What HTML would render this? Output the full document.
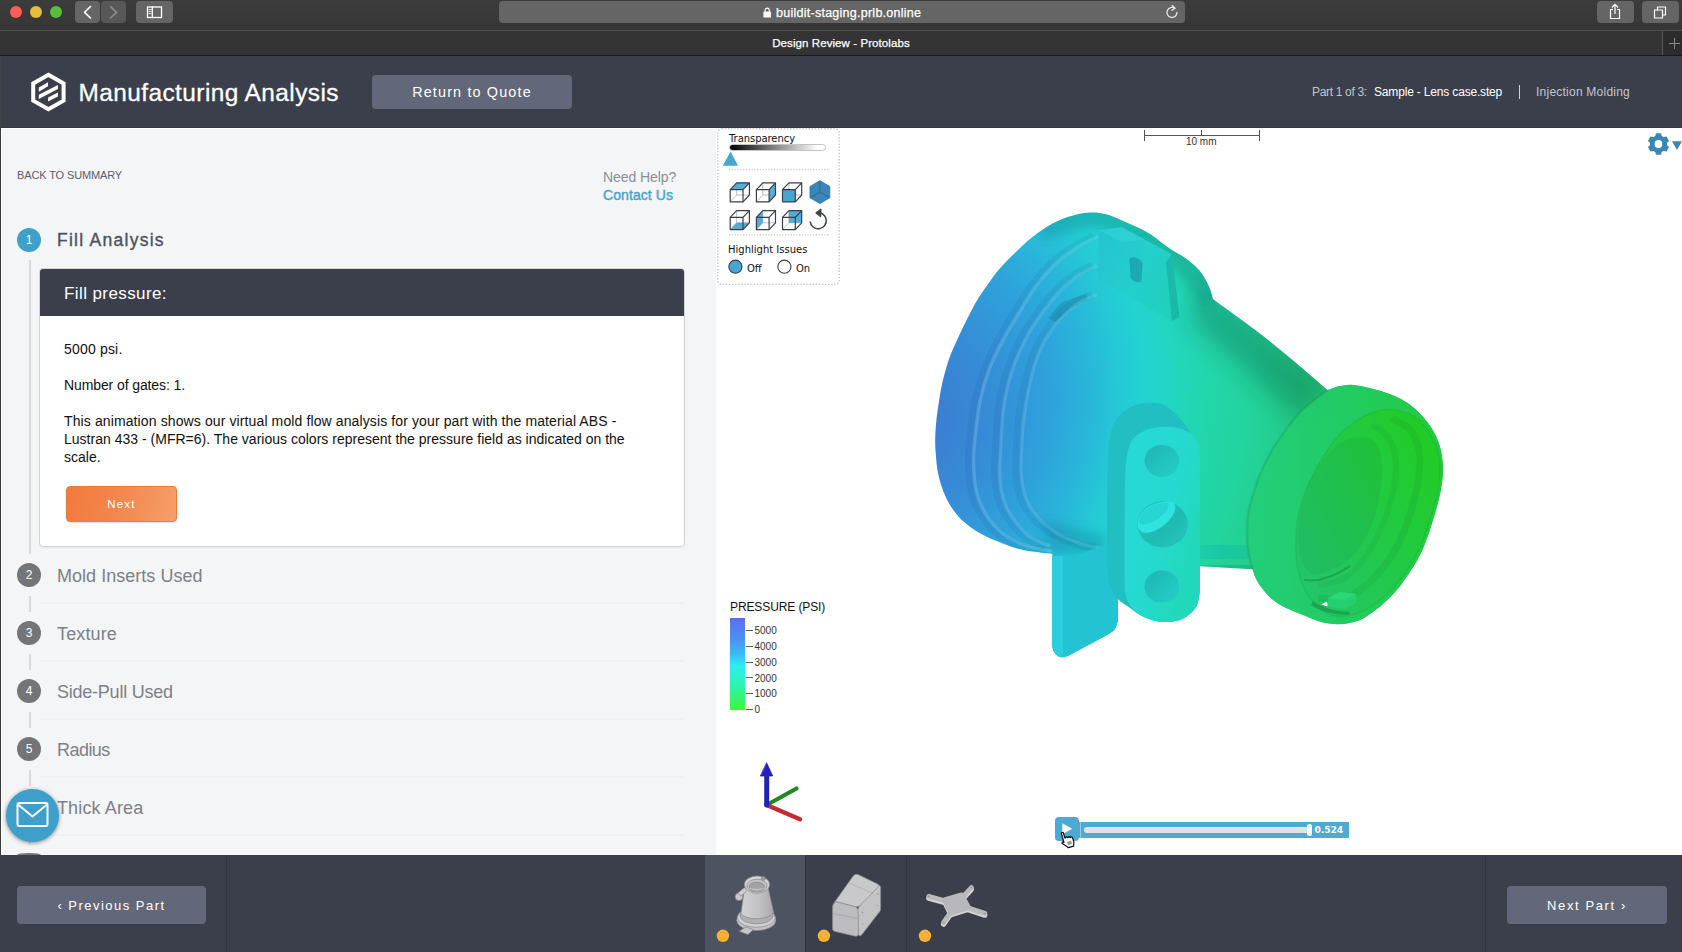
<!DOCTYPE html>
<html lang="en">
<head>
<meta charset="utf-8">
<title>Design Review - Protolabs</title>
<style>
*{box-sizing:border-box;margin:0;padding:0}
html,body{width:1682px;height:952px;overflow:hidden;background:#fff}
body{font-family:"Liberation Sans",sans-serif;position:relative;color:#000}
.abs{position:absolute}
.nw{white-space:nowrap}
#toolbar{left:0;top:0;width:1682px;height:30px;background:linear-gradient(#3c3c3c,#363636)}
#tline{left:0;top:30px;width:1682px;height:1px;background:#4d4d4d}
#tabbar{left:0;top:31px;width:1682px;height:24px;background:#343434}
#tabline{left:0;top:55px;width:1682px;height:1px;background:#1a1a1a}
.tl{width:12px;height:12px;border-radius:50%;top:6px}
.tbtn{background:#656565;border-radius:4px;top:1px;height:22px}
#url{left:499px;top:1px;width:686px;height:22px;background:#656565;border-radius:4px}
#urltxt{left:776px;top:6px;font-size:12.5px;color:#fff;line-height:15px;-webkit-text-stroke:.25px #fff}
#tabtitle{left:0;width:1682px;top:36px;text-align:center;font-size:11.5px;color:#fff;line-height:14px;-webkit-text-stroke:.25px #fff}
#hdr{left:0;top:56px;width:1682px;height:72px;background:#3b3f4b}
#title{left:78.5px;top:79px;font-size:24.4px;line-height:28px;color:#fff;-webkit-text-stroke:.3px #fff}
.gbtn{background:#626879;border-radius:4px;color:#fff;font-size:13px;text-align:center}
#rtq{left:372px;top:75px;width:200px;height:34px;line-height:34px;font-size:14.4px}
.hinfo{top:84px;font-size:12px;line-height:16px}
#left{left:0;top:128px;width:716px;height:727px;background:#f4f5f7;overflow:hidden}
#viewer{left:716px;top:128px;width:966px;height:727px;background:#fff}
#bot{left:0;top:855px;width:1682px;height:97px;background:#3b3f4b}
.step{font-size:18px;line-height:24px;color:#7e8087;left:57px}
.num{width:24px;height:24px;border-radius:50%;background:#747579;color:#fff;font-size:12px;line-height:24px;text-align:center;left:17px}
.vl{left:29px;width:2px;background:#d9dadd}
.sep{left:40px;width:644px;height:2px;background:#f0f1f3}
.body{font-size:14px;line-height:18px;color:#111;left:64px}
.dv{font-family:"DejaVu Sans","Liberation Sans",sans-serif}
</style>
</head>
<body>

<div id="toolbar" class="abs"></div>
<div id="tline" class="abs"></div>
<div id="tabbar" class="abs"></div>
<div id="tabline" class="abs"></div>
<div class="abs tl" style="left:10px;background:#fc5b57"></div>
<div class="abs tl" style="left:30px;background:#e5bf3c"></div>
<div class="abs tl" style="left:50px;background:#57c038"></div>
<div class="abs tbtn" style="left:75px;width:25px"></div>
<div class="abs tbtn" style="left:101px;width:25px;background:#585858"></div>
<div class="abs tbtn" style="left:136px;width:37px"></div>
<svg class="abs" style="left:75px;top:1px" width="100" height="22" viewBox="0 0 100 22" fill="none" stroke="#fff" stroke-width="1.6" stroke-linecap="round" stroke-linejoin="round">
<path d="M15.5 5.5 L9.5 11.3 L15.5 17"/>
<path d="M35.5 5.5 L41.5 11.3 L35.5 17" stroke="#8d8d8d"/>
<rect x="72.5" y="6" width="14" height="10.5" stroke-width="1.3" stroke-linejoin="miter"/>
<path d="M77.3 6 V16.5" stroke-width="1.3"/>
<path d="M73.8 8.5 H76 M73.8 10.5 H76 M73.8 12.5 H76" stroke-width=".8"/>
</svg>
<div id="url" class="abs"></div>
<svg class="abs" style="left:763px;top:7px" width="8.4" height="10.9" viewBox="0 0 10 13"><rect x="0.5" y="5.5" width="9" height="7" rx="1" fill="#fff"/><path d="M2.5 6 V3.8 a2.5 2.5 0 0 1 5 0 V6" fill="none" stroke="#fff" stroke-width="1.3"/></svg>
<div id="urltxt" style="letter-spacing:0.258px" class="abs nw">buildit-staging.prlb.online</div>
<svg class="abs" style="left:1164px;top:4px" width="16" height="16" viewBox="0 0 16 16" fill="none" stroke="#e8e8e8" stroke-width="1.3" stroke-linecap="round"><path d="M13 8.5 a5 5 0 1 1 -2.2 -4.2"/><path d="M8.2 1.5 L11 4.2 L8 6.3" stroke-linejoin="round"/></svg>
<div class="abs tbtn" style="left:1597px;width:37px"></div>
<div class="abs tbtn" style="left:1642px;width:37px"></div>
<svg class="abs" style="left:1597px;top:1px" width="82" height="22" viewBox="0 0 82 22" fill="none" stroke="#fff" stroke-width="1.2" stroke-linecap="round" stroke-linejoin="round">
<path d="M15.5 8.5 H13.5 V17.5 H22.5 V8.5 H20.5"/><path d="M18 12.5 V3.5 M15.3 6 L18 3.3 L20.7 6"/>
<rect x="57.5" y="9" width="8" height="8"/><path d="M60.5 9 V6 H68.5 V14 H65.5"/>
</svg>
<div id="tabtitle" style="letter-spacing:0.083px" class="abs nw">Design Review - Protolabs</div>
<div class="abs" style="left:1662px;top:31px;width:1px;height:24px;background:#575757"></div>
<div class="abs" style="left:1663px;top:31px;width:19px;height:24px;background:#2c2c2c"></div>
<svg class="abs" style="left:1668px;top:37px" width="13" height="13" viewBox="0 0 13 13" stroke="#8a8a8a" stroke-width="1"><path d="M6.5 1 V12 M1 6.5 H12"/></svg>

<div id="hdr" class="abs"></div>
<svg class="abs" style="left:28px;top:70px" width="42" height="44" viewBox="28 70 42 44">
<path d="M48.4 74.8 L63.6 83.4 V100.7 L48.4 109.3 L33.2 100.7 V83.4 Z" fill="none" stroke="#fff" stroke-width="4" stroke-linejoin="miter"/>
<path d="M38.8 87.6 L48 82.2 V86.3 L38.8 91.7Z M38.8 94.8 L57.9 84.9 V88.9 L38.8 98.9Z M48.1 97.5 L57.9 92.4 V96.5 L48.1 101.6Z" fill="#fff"/>
</svg>
<div id="title" style="letter-spacing:0.437px" class="abs nw">Manufacturing Analysis</div>
<div id="rtq" style="letter-spacing:1.15px" class="abs nw gbtn">Return to Quote</div>
<div id="h1" class="abs nw hinfo" style="letter-spacing:-0.328px;left:1312px;color:#c3c5cb">Part 1 of 3:</div>
<div id="h2" class="abs nw hinfo" style="letter-spacing:-0.172px;left:1374px;color:#fff">Sample - Lens case.step</div>
<div class="abs" style="left:1519px;top:85px;width:1px;height:14px;background:#d0d2d6"></div>
<div id="h3" class="abs nw hinfo" style="letter-spacing:0.234px;left:1536px;color:#c3c5cb">Injection Molding</div>
<div id="left" class="abs"></div>
<div class="abs" style="left:1px;top:128px;width:715px;height:1px;background:#fff"></div><div class="abs" style="left:1px;top:128px;width:1px;height:727px;background:#fbfbfc"></div><div class="abs" style="left:0;top:127px;width:1682px;height:1px;background:#343843"></div><div class="abs" style="left:0;top:56px;width:1px;height:72px;background:#404247"></div><div class="abs" style="left:0;top:128px;width:1px;height:727px;background:#3c3c3e"></div>
<div id="bts" class="abs nw" style="letter-spacing:-0.127px;left:17px;top:168px;font-size:11px;line-height:14px;color:#5a5e6a">BACK TO SUMMARY</div>
<div id="nh" class="abs nw" style="letter-spacing:-0.082px;left:603px;top:168px;font-size:14px;line-height:18px;color:#8b8e97">Need Help?</div>
<div id="cu" class="abs nw" style="letter-spacing:0.083px;left:603px;top:186px;font-size:14px;line-height:18px;color:#45a5cf;-webkit-text-stroke:.4px #45a5cf">Contact Us</div>
<div class="abs num" style="top:228px;background:#3fa0cc">1</div>
<div id="s1" class="abs nw step" style="letter-spacing:1.265px;top:228px;color:#4d515d;font-size:17.5px;-webkit-text-stroke:.35px #4d515d">Fill Analysis</div>
<div class="abs vl" style="top:260px;height:294px"></div>
<div class="abs" style="left:39px;top:268px;width:646px;height:279px;background:#fff;border:1px solid #d3d5d9;border-radius:4px;box-shadow:0 1px 2px rgba(0,0,0,.06)"></div>
<div class="abs" style="left:40px;top:269px;width:644px;height:47px;background:#3b3f4b;border-radius:3px 3px 0 0"></div>
<div id="fp" class="abs nw" style="letter-spacing:0.407px;left:64px;top:282.6px;font-size:17px;line-height:22px;color:#fff">Fill pressure:</div>
<div id="b1" class="abs nw body" style="letter-spacing:0.184px;top:340px">5000 psi.</div>
<div id="b2" class="abs nw body" style="letter-spacing:-0.103px;top:376px">Number of gates: 1.</div>
<div id="b3" class="abs nw body" style="letter-spacing:0.114px;top:412px">This animation shows our virtual mold flow analysis for your part with the material ABS -</div>
<div id="b4" class="abs nw body" style="letter-spacing:0.011px;top:430px">Lustran 433 - (MFR=6). The various colors represent the pressure field as indicated on the</div>
<div id="b5" class="abs nw body" style="top:448px">scale.</div>
<div id="nx" class="abs nw" style="left:66px;top:486px;width:111px;height:36px;border-radius:4px;background:linear-gradient(100deg,#f27a3c 0%,#f3864c 45%,#f59e6a 100%);border:1px solid #ee7a40;color:#fff;font-size:11.5px;line-height:34px;text-align:center;letter-spacing:1.2px;box-shadow:0 1px 2px rgba(0,0,0,.15)">Next</div>
<div class="abs num" style="top:563px">2</div>
<div id="s2" class="abs nw step" style="letter-spacing:0.027px;top:563.5px">Mold Inserts Used</div>
<div class="abs vl" style="top:596px;height:16px"></div>
<div class="abs sep" style="top:602px"></div>
<div class="abs num" style="top:621px">3</div>
<div id="s3" class="abs nw step" style="letter-spacing:0.128px;top:621.5px">Texture</div>
<div class="abs vl" style="top:654px;height:16px"></div>
<div class="abs sep" style="top:660px"></div>
<div class="abs num" style="top:679px">4</div>
<div id="s4" class="abs nw step" style="letter-spacing:-0.236px;top:679.5px">Side-Pull Used</div>
<div class="abs vl" style="top:712px;height:16px"></div>
<div class="abs sep" style="top:718px"></div>
<div class="abs num" style="top:737px">5</div>
<div id="s5" class="abs nw step" style="letter-spacing:-0.546px;top:737.5px">Radius</div>
<div class="abs vl" style="top:770px;height:16px"></div>
<div class="abs sep" style="top:776px"></div>
<div class="abs num" style="top:795px">6</div>
<div id="s6" class="abs nw step" style="letter-spacing:0.128px;top:795.5px">Thick Area</div>
<div class="abs vl" style="top:828px;height:16px"></div>
<div class="abs sep" style="top:834px"></div>
<div class="abs num" style="top:853px;height:2px;border-radius:12px 12px 0 0/2px 2px 0 0;overflow:hidden"></div>
<div class="abs" style="left:6px;top:789px;width:53px;height:53px;border-radius:50%;background:#3f9fcb;box-shadow:0 1px 4px rgba(0,0,0,.45)"></div>
<svg class="abs" style="left:16px;top:800px" width="34" height="30" viewBox="0 0 34 30" fill="none" stroke="#fff" stroke-width="2" stroke-linejoin="round"><rect x="1.5" y="3" width="30" height="23" rx="2"/><path d="M2 4.5 L16.5 16.5 L31 4.5"/></svg>
<div id="viewer" class="abs"></div>
<svg class="abs" style="left:716px;top:128px" width="966" height="727" viewBox="716 128 966 727">
<defs>
<radialGradient id="gMain" gradientUnits="userSpaceOnUse" cx="0" cy="0" r="560" gradientTransform="translate(902 424) rotate(21.15) scale(1 1.22)"><stop offset="0" stop-color="#3c7cd2"/><stop offset=".07" stop-color="#3b80d3"/><stop offset=".15" stop-color="#368cd6"/><stop offset=".26" stop-color="#2ea3db"/><stop offset=".316" stop-color="#29b3da"/><stop offset=".38" stop-color="#24cad6"/><stop offset=".42" stop-color="#22d3d2"/><stop offset=".47" stop-color="#22d6c0"/><stop offset=".52" stop-color="#22d6ae"/><stop offset=".60" stop-color="#22d49e"/><stop offset=".69" stop-color="#22cc84"/><stop offset=".78" stop-color="#22c86c"/><stop offset=".9" stop-color="#22c84a"/><stop offset="1" stop-color="#22c834"/></radialGradient>
<linearGradient id="gOpen" gradientUnits="userSpaceOnUse" x1="1296" y1="540" x2="1440" y2="470"><stop offset="0" stop-color="#23c666"/><stop offset=".45" stop-color="#22c94a"/><stop offset="1" stop-color="#21cc26"/></linearGradient>
<linearGradient id="gRing" gradientUnits="userSpaceOnUse" x1="1250" y1="500" x2="1440" y2="500"><stop offset="0" stop-color="#23cd78" stop-opacity=".85"/><stop offset=".5" stop-color="#22cc62" stop-opacity=".9"/><stop offset="1" stop-color="#22cc40"/></linearGradient>
<linearGradient id="gTab" gradientUnits="userSpaceOnUse" x1="1098" y1="250" x2="1180" y2="290"><stop offset="0" stop-color="#25c4d2"/><stop offset=".5" stop-color="#23cfcc"/><stop offset="1" stop-color="#21d0bc"/></linearGradient>
<linearGradient id="gBr" gradientUnits="userSpaceOnUse" x1="1124" y1="500" x2="1200" y2="520"><stop offset="0" stop-color="#27d9d6"/><stop offset=".55" stop-color="#25d9d0"/><stop offset="1" stop-color="#22d8ba"/></linearGradient>
<linearGradient id="gHole2" x1="0" y1="0" x2="1" y2="1"><stop offset="0" stop-color="#22c8c2"/><stop offset=".55" stop-color="#1fbab2"/><stop offset="1" stop-color="#22c8bc"/></linearGradient>
<linearGradient id="gHole" x1="0" y1="0" x2="1" y2="1"><stop offset="0" stop-color="#1fb4b4"/><stop offset="1" stop-color="#23d0c8"/></linearGradient>
<filter id="b12" x="-30%" y="-30%" width="160%" height="160%"><feGaussianBlur stdDeviation="12"/></filter>
<filter id="b6" x="-30%" y="-30%" width="160%" height="160%"><feGaussianBlur stdDeviation="6"/></filter>
<filter id="b3" x="-30%" y="-30%" width="160%" height="160%"><feGaussianBlur stdDeviation="3"/></filter>
<filter id="b2" x="-30%" y="-30%" width="160%" height="160%"><feGaussianBlur stdDeviation="1.6"/></filter>
<clipPath id="cSil"><path d="M1096.5 212.6C1098.8 213.1 1105.2 213.9 1110.0 215.5C1114.8 217.1 1119.1 219.2 1125.4 222.1C1131.7 225.0 1140.4 228.2 1148.0 232.7C1155.6 237.2 1164.5 245.0 1170.8 249.3C1177.1 253.6 1181.1 254.9 1185.9 258.4C1190.7 261.9 1195.7 266.0 1199.5 270.5C1203.3 275.0 1206.3 280.8 1208.6 285.6C1210.9 290.4 1212.3 296.9 1213.1 299.2C1220.2 304.4 1242.6 320.2 1256.0 330.5C1269.4 340.8 1281.6 350.9 1293.5 360.8C1305.4 370.7 1321.8 385.1 1327.5 390.0C1329.6 389.3 1335.6 386.8 1340.0 386.0C1344.4 385.2 1347.0 384.1 1354.0 385.0C1361.0 385.9 1372.9 388.4 1381.7 391.3C1390.5 394.2 1399.4 397.6 1406.9 402.6C1414.5 407.6 1421.8 415.0 1427.0 421.5C1432.2 428.0 1435.8 434.9 1438.4 441.7C1441.0 448.4 1442.1 455.3 1442.7 462.0C1443.3 468.7 1443.3 473.9 1442.2 482.0C1441.1 490.1 1439.3 499.1 1435.9 510.6C1432.5 522.1 1427.7 538.8 1422.0 551.0C1416.3 563.2 1408.3 574.9 1401.8 583.7C1395.3 592.5 1389.4 598.2 1383.0 604.0C1376.6 609.8 1368.5 615.3 1363.3 618.4C1358.1 621.5 1355.5 621.4 1351.7 622.4C1347.9 623.4 1344.1 624.0 1340.2 624.2C1336.3 624.4 1332.4 624.2 1328.6 623.6C1324.8 623.0 1320.9 622.0 1317.1 620.7C1313.2 619.5 1309.3 617.7 1305.5 616.1C1301.7 614.5 1297.8 613.0 1294.0 611.4C1290.2 609.8 1286.2 608.4 1282.4 606.2C1278.6 604.0 1274.4 601.3 1270.9 598.2C1267.4 595.1 1264.1 591.1 1261.6 587.8C1259.1 584.5 1257.3 581.6 1255.8 578.5C1254.3 575.4 1253.0 570.8 1252.4 569.3L1200 566.3L1200 590C1199.3 592.8 1199.0 602.2 1196.0 607.0C1193.0 611.8 1187.7 616.5 1182.0 619.0C1176.3 621.5 1168.5 622.4 1162.0 622.0C1155.5 621.6 1148.5 619.0 1143.0 616.5C1137.5 614.0 1131.3 608.6 1129.0 607.0C1127.7 605.8 1122.8 602.5 1121.0 600.0C1119.2 597.5 1118.5 593.3 1118.0 592.0L1118 621C1117.4 622.4 1116.2 627.2 1114.5 629.5C1112.8 631.8 1109.1 633.7 1108.0 634.5L1068 656C1066.7 656.2 1062.3 657.7 1060.0 657.0C1057.7 656.3 1055.3 654.0 1054.0 652.0C1052.7 650.0 1052.6 646.2 1052.3 645.0L1052.3 554C1050.2 553.8 1045.2 553.4 1039.7 552.6C1034.2 551.8 1026.0 550.9 1019.1 549.1C1012.2 547.3 1005.1 544.5 998.5 541.8C991.9 539.1 985.0 536.1 979.4 532.9C973.8 529.7 969.1 526.5 964.7 522.6C960.3 518.7 956.3 514.3 952.9 509.4C949.5 504.5 946.5 499.1 944.1 493.2C941.7 487.3 939.6 481.0 938.2 474.1C936.8 467.2 936.1 458.5 935.6 452.0C935.1 445.5 935.1 440.7 935.3 435.0C935.5 429.3 936.0 423.8 936.6 418.0C937.2 412.2 938.4 405.1 939.2 400.0C940.0 394.9 940.4 392.1 941.4 387.3C942.4 382.6 943.7 376.8 945.2 371.5C946.7 366.2 948.2 361.1 950.2 355.8C952.2 350.6 955.2 344.3 957.1 340.0C959.0 335.7 959.7 334.1 961.7 330.0C963.7 325.9 966.3 320.4 968.9 315.4C971.5 310.4 974.0 305.3 977.1 300.2C980.2 295.1 984.2 289.5 987.8 284.5C991.4 279.5 993.6 275.7 998.5 270.0C1003.4 264.3 1011.0 256.6 1017.4 250.5C1023.8 244.4 1029.9 238.6 1037.0 233.5C1044.1 228.4 1052.2 223.4 1060.0 220.0C1067.8 216.6 1077.8 214.3 1083.9 213.1C1090.0 211.9 1094.4 212.7 1096.5 212.6Z"/></clipPath>
</defs>
<path d="M1096.5 212.6C1098.8 213.1 1105.2 213.9 1110.0 215.5C1114.8 217.1 1119.1 219.2 1125.4 222.1C1131.7 225.0 1140.4 228.2 1148.0 232.7C1155.6 237.2 1164.5 245.0 1170.8 249.3C1177.1 253.6 1181.1 254.9 1185.9 258.4C1190.7 261.9 1195.7 266.0 1199.5 270.5C1203.3 275.0 1206.3 280.8 1208.6 285.6C1210.9 290.4 1212.3 296.9 1213.1 299.2C1220.2 304.4 1242.6 320.2 1256.0 330.5C1269.4 340.8 1281.6 350.9 1293.5 360.8C1305.4 370.7 1321.8 385.1 1327.5 390.0C1329.6 389.3 1335.6 386.8 1340.0 386.0C1344.4 385.2 1347.0 384.1 1354.0 385.0C1361.0 385.9 1372.9 388.4 1381.7 391.3C1390.5 394.2 1399.4 397.6 1406.9 402.6C1414.5 407.6 1421.8 415.0 1427.0 421.5C1432.2 428.0 1435.8 434.9 1438.4 441.7C1441.0 448.4 1442.1 455.3 1442.7 462.0C1443.3 468.7 1443.3 473.9 1442.2 482.0C1441.1 490.1 1439.3 499.1 1435.9 510.6C1432.5 522.1 1427.7 538.8 1422.0 551.0C1416.3 563.2 1408.3 574.9 1401.8 583.7C1395.3 592.5 1389.4 598.2 1383.0 604.0C1376.6 609.8 1368.5 615.3 1363.3 618.4C1358.1 621.5 1355.5 621.4 1351.7 622.4C1347.9 623.4 1344.1 624.0 1340.2 624.2C1336.3 624.4 1332.4 624.2 1328.6 623.6C1324.8 623.0 1320.9 622.0 1317.1 620.7C1313.2 619.5 1309.3 617.7 1305.5 616.1C1301.7 614.5 1297.8 613.0 1294.0 611.4C1290.2 609.8 1286.2 608.4 1282.4 606.2C1278.6 604.0 1274.4 601.3 1270.9 598.2C1267.4 595.1 1264.1 591.1 1261.6 587.8C1259.1 584.5 1257.3 581.6 1255.8 578.5C1254.3 575.4 1253.0 570.8 1252.4 569.3L1200 566.3L1200 590C1199.3 592.8 1199.0 602.2 1196.0 607.0C1193.0 611.8 1187.7 616.5 1182.0 619.0C1176.3 621.5 1168.5 622.4 1162.0 622.0C1155.5 621.6 1148.5 619.0 1143.0 616.5C1137.5 614.0 1131.3 608.6 1129.0 607.0C1127.7 605.8 1122.8 602.5 1121.0 600.0C1119.2 597.5 1118.5 593.3 1118.0 592.0L1118 621C1117.4 622.4 1116.2 627.2 1114.5 629.5C1112.8 631.8 1109.1 633.7 1108.0 634.5L1068 656C1066.7 656.2 1062.3 657.7 1060.0 657.0C1057.7 656.3 1055.3 654.0 1054.0 652.0C1052.7 650.0 1052.6 646.2 1052.3 645.0L1052.3 554C1050.2 553.8 1045.2 553.4 1039.7 552.6C1034.2 551.8 1026.0 550.9 1019.1 549.1C1012.2 547.3 1005.1 544.5 998.5 541.8C991.9 539.1 985.0 536.1 979.4 532.9C973.8 529.7 969.1 526.5 964.7 522.6C960.3 518.7 956.3 514.3 952.9 509.4C949.5 504.5 946.5 499.1 944.1 493.2C941.7 487.3 939.6 481.0 938.2 474.1C936.8 467.2 936.1 458.5 935.6 452.0C935.1 445.5 935.1 440.7 935.3 435.0C935.5 429.3 936.0 423.8 936.6 418.0C937.2 412.2 938.4 405.1 939.2 400.0C940.0 394.9 940.4 392.1 941.4 387.3C942.4 382.6 943.7 376.8 945.2 371.5C946.7 366.2 948.2 361.1 950.2 355.8C952.2 350.6 955.2 344.3 957.1 340.0C959.0 335.7 959.7 334.1 961.7 330.0C963.7 325.9 966.3 320.4 968.9 315.4C971.5 310.4 974.0 305.3 977.1 300.2C980.2 295.1 984.2 289.5 987.8 284.5C991.4 279.5 993.6 275.7 998.5 270.0C1003.4 264.3 1011.0 256.6 1017.4 250.5C1023.8 244.4 1029.9 238.6 1037.0 233.5C1044.1 228.4 1052.2 223.4 1060.0 220.0C1067.8 216.6 1077.8 214.3 1083.9 213.1C1090.0 211.9 1094.4 212.7 1096.5 212.6Z" fill="url(#gMain)"/>
<g clip-path="url(#cSil)">
<path d="M1205 285 L1335 385 L1300 420 L1190 320Z" fill="#06402a" fill-opacity=".27" filter="url(#b12)"/>
<path d="M1040.0 228.0C1048.3 225.8 1073.3 214.3 1090.0 215.0C1106.7 215.7 1124.2 224.2 1140.0 232.0C1155.8 239.8 1173.0 250.7 1185.0 262.0C1197.0 273.3 1207.5 293.7 1212.0 300.0" fill="none" stroke="#064a5a" stroke-opacity=".22" stroke-width="26" filter="url(#b6)"/>
<path d="M1198 548 L1252 556" fill="none" stroke="#10a8c0" stroke-opacity=".28" stroke-width="44" filter="url(#b12)"/>
<path d="M1040 520 L1105 535 L1105 556 L1050 552Z" fill="#064a7a" fill-opacity=".22" filter="url(#b6)"/>
<path d="M1048 318 L1062 302 L1086 294 L1088 299 L1070 309 L1056 322Z" fill="#0a5a78" fill-opacity=".22" filter="url(#b3)"/>
<path d="M1196 566 L1254 569" fill="none" stroke="#065a60" stroke-opacity=".22" stroke-width="14" filter="url(#b6)"/>
<path d="M1097.8 236.5C1094.0 238.6 1082.0 244.5 1075.0 249.0C1068.0 253.5 1062.5 257.1 1056.0 263.3C1049.5 269.5 1042.1 277.9 1036.0 286.0C1029.9 294.1 1024.8 303.3 1019.5 312.0C1014.2 320.7 1008.9 328.8 1004.0 338.0C999.1 347.2 994.0 356.5 990.0 367.0C986.0 377.5 982.5 389.0 980.0 401.0C977.5 413.0 975.9 429.3 974.8 439.0C973.7 448.7 973.4 451.1 973.5 459.4C973.6 467.7 974.0 480.2 975.7 488.8C977.4 497.4 980.0 504.0 983.8 510.9C987.6 517.8 992.6 524.6 998.5 530.0C1004.4 535.4 1012.1 539.8 1019.0 543.0C1025.9 546.2 1034.2 547.7 1039.7 549.0C1045.2 550.3 1050.0 550.7 1052.0 551.0" fill="none" stroke="#0a3070" stroke-opacity=".08" stroke-width="8" transform="translate(-4.5,0)" filter="url(#b2)"/>
<path d="M1097.8 236.5C1094.0 238.6 1082.0 244.5 1075.0 249.0C1068.0 253.5 1062.5 257.1 1056.0 263.3C1049.5 269.5 1042.1 277.9 1036.0 286.0C1029.9 294.1 1024.8 303.3 1019.5 312.0C1014.2 320.7 1008.9 328.8 1004.0 338.0C999.1 347.2 994.0 356.5 990.0 367.0C986.0 377.5 982.5 389.0 980.0 401.0C977.5 413.0 975.9 429.3 974.8 439.0C973.7 448.7 973.4 451.1 973.5 459.4C973.6 467.7 974.0 480.2 975.7 488.8C977.4 497.4 980.0 504.0 983.8 510.9C987.6 517.8 992.6 524.6 998.5 530.0C1004.4 535.4 1012.1 539.8 1019.0 543.0C1025.9 546.2 1034.2 547.7 1039.7 549.0C1045.2 550.3 1050.0 550.7 1052.0 551.0" fill="none" stroke="#a8dcff" stroke-opacity="0.24" stroke-width="3.6" filter="url(#b2)"/>
<path d="M1097.0 265.7C1094.2 267.2 1085.8 270.6 1080.0 274.5C1074.2 278.4 1068.3 282.6 1062.0 289.0C1055.7 295.4 1048.2 304.5 1042.0 313.0C1035.8 321.5 1030.2 329.8 1025.0 340.0C1019.8 350.2 1014.6 362.7 1011.0 374.0C1007.4 385.3 1005.2 395.4 1003.5 408.0C1001.8 420.6 1001.2 439.3 1000.6 449.6C1000.0 459.9 999.5 463.5 999.6 470.0C999.7 476.5 999.9 482.7 1001.0 488.8C1002.1 494.9 1003.3 500.6 1006.0 506.5C1008.7 512.4 1012.8 518.9 1017.0 524.0C1021.2 529.1 1025.5 533.7 1031.0 537.4C1036.5 541.1 1046.8 544.6 1050.0 546.0" fill="none" stroke="#0a3070" stroke-opacity=".08" stroke-width="8" transform="translate(-4.5,0)" filter="url(#b2)"/>
<path d="M1097.0 265.7C1094.2 267.2 1085.8 270.6 1080.0 274.5C1074.2 278.4 1068.3 282.6 1062.0 289.0C1055.7 295.4 1048.2 304.5 1042.0 313.0C1035.8 321.5 1030.2 329.8 1025.0 340.0C1019.8 350.2 1014.6 362.7 1011.0 374.0C1007.4 385.3 1005.2 395.4 1003.5 408.0C1001.8 420.6 1001.2 439.3 1000.6 449.6C1000.0 459.9 999.5 463.5 999.6 470.0C999.7 476.5 999.9 482.7 1001.0 488.8C1002.1 494.9 1003.3 500.6 1006.0 506.5C1008.7 512.4 1012.8 518.9 1017.0 524.0C1021.2 529.1 1025.5 533.7 1031.0 537.4C1036.5 541.1 1046.8 544.6 1050.0 546.0" fill="none" stroke="#a8dcff" stroke-opacity="0.22" stroke-width="3.4" filter="url(#b2)"/>
<path d="M1097.0 294.8C1095.0 295.6 1089.5 297.1 1085.0 299.5C1080.5 301.9 1075.5 304.6 1070.0 309.5C1064.5 314.4 1057.3 321.5 1052.0 329.0C1046.7 336.5 1041.8 345.4 1038.0 354.7C1034.2 364.0 1031.9 374.1 1029.5 385.0C1027.1 395.9 1024.8 409.2 1023.5 420.0C1022.2 430.8 1021.9 441.7 1021.5 450.0C1021.1 458.3 1020.8 464.0 1021.0 470.0C1021.2 476.0 1021.3 480.4 1022.5 486.0C1023.7 491.6 1025.1 497.9 1028.0 503.5C1030.9 509.1 1035.3 515.0 1039.7 519.7C1044.1 524.4 1050.2 528.5 1054.4 531.5C1058.6 534.5 1059.9 535.1 1065.0 537.4C1070.1 539.6 1079.2 543.2 1085.0 545.0C1090.8 546.8 1097.5 547.5 1100.0 548.0" fill="none" stroke="#0a3070" stroke-opacity=".08" stroke-width="8" transform="translate(-4.5,0)" filter="url(#b2)"/>
<path d="M1097.0 294.8C1095.0 295.6 1089.5 297.1 1085.0 299.5C1080.5 301.9 1075.5 304.6 1070.0 309.5C1064.5 314.4 1057.3 321.5 1052.0 329.0C1046.7 336.5 1041.8 345.4 1038.0 354.7C1034.2 364.0 1031.9 374.1 1029.5 385.0C1027.1 395.9 1024.8 409.2 1023.5 420.0C1022.2 430.8 1021.9 441.7 1021.5 450.0C1021.1 458.3 1020.8 464.0 1021.0 470.0C1021.2 476.0 1021.3 480.4 1022.5 486.0C1023.7 491.6 1025.1 497.9 1028.0 503.5C1030.9 509.1 1035.3 515.0 1039.7 519.7C1044.1 524.4 1050.2 528.5 1054.4 531.5C1058.6 534.5 1059.9 535.1 1065.0 537.4C1070.1 539.6 1079.2 543.2 1085.0 545.0C1090.8 546.8 1097.5 547.5 1100.0 548.0" fill="none" stroke="#a8dcff" stroke-opacity="0.2" stroke-width="3.4" filter="url(#b2)"/>
</g>
<path d="M1327.5 390.0C1323.1 393.6 1308.8 403.6 1301.0 411.4C1293.2 419.2 1286.7 428.2 1280.8 436.6C1274.9 445.0 1269.8 453.7 1265.7 461.8C1261.6 469.9 1259.0 476.1 1256.0 485.0C1253.0 493.9 1249.4 505.0 1248.0 515.0C1246.6 525.0 1246.8 536.0 1247.5 545.0C1248.2 554.0 1251.6 565.2 1252.4 569.3C1253.0 570.8 1254.3 575.4 1255.8 578.5C1257.3 581.6 1259.1 584.5 1261.6 587.8C1264.1 591.1 1267.4 595.1 1270.9 598.2C1274.4 601.3 1278.6 604.0 1282.4 606.2C1286.2 608.4 1290.2 609.8 1294.0 611.4C1297.8 613.0 1301.7 614.5 1305.5 616.1C1309.3 617.7 1313.2 619.5 1317.1 620.7C1320.9 622.0 1324.8 623.0 1328.6 623.6C1332.4 624.2 1336.3 624.4 1340.2 624.2C1344.1 624.0 1347.9 623.4 1351.7 622.4C1355.5 621.4 1358.1 621.5 1363.3 618.4C1368.5 615.3 1376.6 609.8 1383.0 604.0C1389.4 598.2 1395.3 592.5 1401.8 583.7C1408.3 574.9 1416.3 563.2 1422.0 551.0C1427.7 538.8 1432.5 522.1 1435.9 510.6C1439.3 499.1 1441.1 490.1 1442.2 482.0C1443.3 473.9 1443.3 468.7 1442.7 462.0C1442.1 455.3 1441.0 448.4 1438.4 441.7C1435.8 434.9 1432.2 428.0 1427.0 421.5C1421.8 415.0 1414.5 407.6 1406.9 402.6C1399.4 397.6 1390.5 394.2 1381.7 391.3C1372.9 388.4 1361.0 385.9 1354.0 385.0C1347.0 384.1 1344.4 385.2 1340.0 386.0C1335.6 386.8 1329.6 389.3 1327.5 390.0Z" fill="url(#gRing)" clip-path="url(#cSil)"/>
<path d="M1327.5 390.0C1323.1 393.6 1308.8 403.6 1301.0 411.4C1293.2 419.2 1286.7 428.2 1280.8 436.6C1274.9 445.0 1269.8 453.7 1265.7 461.8C1261.6 469.9 1259.0 476.1 1256.0 485.0C1253.0 493.9 1249.4 505.0 1248.0 515.0C1246.6 525.0 1246.8 536.0 1247.5 545.0C1248.2 554.0 1251.6 565.2 1252.4 569.3" fill="none" stroke="#0a5030" stroke-opacity=".13" stroke-width="2.5" filter="url(#b2)"/>
<path d="M1296.0 548.0C1295.9 539.7 1296.0 529.3 1297.5 520.0C1299.0 510.7 1301.6 501.2 1305.0 492.0C1308.4 482.8 1313.0 473.7 1318.0 465.0C1323.0 456.3 1328.7 447.3 1335.0 440.0C1341.3 432.7 1348.8 425.8 1356.0 421.0C1363.2 416.2 1371.0 412.8 1378.0 411.0C1385.0 409.2 1391.7 409.3 1398.0 410.5C1404.3 411.7 1410.7 414.1 1416.0 418.0C1421.3 421.9 1426.2 427.8 1430.0 434.0C1433.8 440.2 1436.9 447.3 1438.5 455.0C1440.1 462.7 1440.4 470.8 1439.5 480.0C1438.6 489.2 1436.4 498.5 1433.0 510.0C1429.6 521.5 1424.7 537.2 1419.0 549.0C1413.3 560.8 1406.3 571.8 1399.0 581.0C1391.7 590.2 1382.8 598.3 1375.0 604.0C1367.2 609.7 1358.8 613.1 1352.0 615.0C1345.2 616.9 1339.7 616.8 1334.0 615.5C1328.3 614.2 1322.8 611.2 1318.0 607.0C1313.2 602.8 1308.3 596.2 1305.0 590.0C1301.7 583.8 1299.5 577.0 1298.0 570.0C1296.5 563.0 1296.1 556.3 1296.0 548.0Z" fill="url(#gOpen)"/>
<path d="M1296.0 548.0C1295.9 539.7 1296.0 529.3 1297.5 520.0C1299.0 510.7 1301.6 501.2 1305.0 492.0C1308.4 482.8 1313.0 473.7 1318.0 465.0C1323.0 456.3 1328.7 447.3 1335.0 440.0C1341.3 432.7 1348.8 425.8 1356.0 421.0C1363.2 416.2 1371.0 412.8 1378.0 411.0C1385.0 409.2 1391.7 409.3 1398.0 410.5C1404.3 411.7 1410.7 414.1 1416.0 418.0C1421.3 421.9 1426.2 427.8 1430.0 434.0C1433.8 440.2 1436.9 447.3 1438.5 455.0C1440.1 462.7 1440.4 470.8 1439.5 480.0C1438.6 489.2 1436.4 498.5 1433.0 510.0C1429.6 521.5 1424.7 537.2 1419.0 549.0C1413.3 560.8 1406.3 571.8 1399.0 581.0C1391.7 590.2 1382.8 598.3 1375.0 604.0C1367.2 609.7 1358.8 613.1 1352.0 615.0C1345.2 616.9 1339.7 616.8 1334.0 615.5C1328.3 614.2 1322.8 611.2 1318.0 607.0C1313.2 602.8 1308.3 596.2 1305.0 590.0C1301.7 583.8 1299.5 577.0 1298.0 570.0C1296.5 563.0 1296.1 556.3 1296.0 548.0Z" fill="none" stroke="#0a6020" stroke-opacity=".10" stroke-width="1.5" filter="url(#b2)"/>
<g filter="url(#b3)">
<path d="M1392.0 418.0C1395.3 420.3 1407.3 425.0 1412.0 432.0C1416.7 439.0 1419.7 448.7 1420.0 460.0C1420.3 471.3 1417.7 485.8 1414.0 500.0C1410.3 514.2 1405.0 531.7 1398.0 545.0C1391.0 558.3 1380.8 571.2 1372.0 580.0C1363.2 588.8 1354.0 595.0 1345.0 598.0C1336.0 601.0 1322.5 598.0 1318.0 598.0" fill="none" stroke="#0a6020" stroke-opacity=".09" stroke-width="7"/>
<path d="M1372.0 425.0C1375.0 427.5 1386.0 432.5 1390.0 440.0C1394.0 447.5 1396.3 458.3 1396.0 470.0C1395.7 481.7 1392.3 496.7 1388.0 510.0C1383.7 523.3 1377.2 538.7 1370.0 550.0C1362.8 561.3 1353.7 572.2 1345.0 578.0C1336.3 583.8 1322.5 583.8 1318.0 585.0" fill="none" stroke="#0a6020" stroke-opacity=".07" stroke-width="6"/>
<path d="M1299.0 552.0C1296.8 541.3 1298.2 523.7 1301.0 510.0C1303.8 496.3 1309.2 481.3 1316.0 470.0C1322.8 458.7 1332.7 447.0 1342.0 442.0C1351.3 437.0 1365.3 435.3 1372.0 440.0C1378.7 444.7 1382.0 456.0 1382.0 470.0C1382.0 484.0 1377.7 509.0 1372.0 524.0C1366.3 539.0 1357.7 551.7 1348.0 560.0C1338.3 568.3 1322.2 575.3 1314.0 574.0C1305.8 572.7 1301.2 562.7 1299.0 552.0Z" fill="#0a6040" fill-opacity=".09"/>
</g>
<path d="M1304.0 580.0C1306.3 580.0 1312.7 581.0 1318.0 580.0C1323.3 579.0 1330.7 576.3 1336.0 574.0C1341.3 571.7 1347.7 567.3 1350.0 566.0" fill="none" stroke="#0a5a28" stroke-opacity=".28" stroke-width="2.2" filter="url(#b2)"/>
<path d="M1328 598 L1340 592 L1356 594 L1356 603 L1344 609 L1328 607Z" fill="#25d070"/>
<path d="M1328 598 L1340 592 L1356 594 L1344 600Z" fill="#2ad878"/>
<path d="M1313 601 C1320 607 1335 611 1350 612 L1349 615 C1333 615 1320 611 1311 605Z" fill="#159048" fill-opacity=".6"/>
<path d="M1321.3 604.6 L1327 601.4 L1327.6 606.4Z" fill="#fff"/>
<path d="M1052.3 556 L1052.3 645C1052.6 646.2 1052.7 650.0 1054.0 652.0C1055.3 654.0 1057.7 656.3 1060.0 657.0C1062.3 657.7 1066.7 656.2 1068.0 656.0L1108 634.5C1109.1 633.7 1112.8 631.8 1114.5 629.5C1116.2 627.2 1117.4 622.4 1118.0 621.0L1118 543 L1108 544C1105.3 544.9 1098.0 547.6 1092.0 549.5C1086.0 551.4 1078.6 554.4 1072.0 555.5C1065.4 556.6 1055.6 555.9 1052.3 556.0Z" fill="#24c3d3"/>
<path d="M1052.3 556 L1052.3 646 C1053 652 1057 656.5 1063 657 L1063 556Z" fill="#29cfde"/>
<path d="M1107.0 560.0C1107.0 554.0 1106.9 538.9 1107.0 524.0C1107.1 509.1 1107.0 486.0 1107.6 470.8C1108.2 455.6 1108.6 442.3 1110.7 433.0C1112.8 423.7 1116.2 419.5 1120.3 414.8C1124.4 410.1 1130.4 407.0 1135.4 405.0C1140.4 403.0 1145.5 402.6 1150.5 402.7C1155.5 402.8 1160.5 402.9 1165.6 405.7C1170.6 408.5 1176.5 414.5 1180.8 419.3C1185.1 424.1 1189.6 432.0 1191.4 434.5L1200 452 L1200 590C1199.3 592.8 1199.0 602.2 1196.0 607.0C1193.0 611.8 1187.7 616.5 1182.0 619.0C1176.3 621.5 1168.5 622.4 1162.0 622.0C1155.5 621.6 1148.5 619.0 1143.0 616.5C1137.5 614.0 1131.3 608.6 1129.0 607.0C1127.2 605.7 1121.2 602.8 1118.0 599.0C1114.8 595.2 1111.3 590.5 1109.5 584.0C1107.7 577.5 1107.4 564.0 1107.0 560.0Z" fill="#21bfc1"/>
<path d="M1124.5 590.0C1124.5 579.0 1124.3 543.9 1124.5 524.0C1124.7 504.1 1124.8 483.5 1125.5 470.8C1126.2 458.1 1127.0 453.8 1128.8 448.0C1130.5 442.2 1132.4 439.3 1136.0 436.0C1139.6 432.7 1145.6 429.9 1150.5 428.4C1155.4 426.9 1160.5 426.9 1165.6 426.9C1170.6 426.9 1176.5 427.1 1180.8 428.4C1185.1 429.7 1188.7 432.2 1191.4 434.5C1194.1 436.8 1195.6 439.1 1197.0 442.0C1198.4 444.9 1199.5 450.3 1200.0 452.0L1200 590C1199.3 592.8 1199.0 602.2 1196.0 607.0C1193.0 611.8 1187.7 616.5 1182.0 619.0C1176.3 621.5 1168.5 622.4 1162.0 622.0C1155.5 621.6 1148.3 619.3 1143.0 616.5C1137.7 613.7 1133.1 609.4 1130.0 605.0C1126.9 600.6 1125.4 592.5 1124.5 590.0Z" fill="url(#gBr)"/>
<ellipse cx="1161.9" cy="460.9" rx="17.4" ry="16" fill="url(#gHole)"/>
<ellipse cx="1161.9" cy="586.6" rx="17.4" ry="16" fill="url(#gHole)"/>
<ellipse cx="1162.6" cy="524.3" rx="25.3" ry="23" fill="url(#gHole2)"/>
<path d="M1137.6 526 C1137 512 1150 502 1168 501.5 C1180 502 1176 516 1163 526 C1152 534 1140 536 1137.6 526Z" fill="#2fe4de"/>
<path d="M1138.5 522 C1141 510 1152 503 1167 502.5 C1172 504 1166 514 1156 520 C1148 525 1141 526 1138.5 522Z" fill="#27d6d2"/>
<path d="M1099 230.2L1121.7 227.2L1172 254.2L1179.6 317.2L1172 321L1097.7 279.4Z" fill="url(#gTab)"/>
<path d="M1099 230.2L1121.7 227.2L1145 239.5 L1122 242Z" fill="#3fe0d8" fill-opacity=".35"/>
<path d="M1172 254.2L1179.6 317.2L1172 321L1166 262Z" fill="#0f8f80" fill-opacity=".35"/>
<path d="M1129.5 258 C1134 256 1141 259 1142.5 263 L1141.5 281 C1138 284 1132 281 1130.5 277Z" fill="#168aa0" fill-opacity=".55" filter="url(#b2)"/>
</svg>
<div id="tr" class="abs nw dv" style="letter-spacing:-0.055px;left:729px;top:132px;font-size:10px;line-height:13px;color:#111">Transparency</div>
<div class="abs" style="left:729px;top:144px;width:97px;height:7px;border:1px solid #c4c4c4;border-radius:4px;background:linear-gradient(90deg,#000,#222 12%,#fff 92%)"></div>
<svg class="abs" style="left:716px;top:128px" width="130" height="160" viewBox="716 128 130 160" fill="none" stroke="#3b3f4b" stroke-width="1.2" stroke-linejoin="round">
<path d="M730.6 151.5 L738 165.7 L722.7 165.7Z" fill="#45a6d2" stroke="none"/>
<rect x="717.8" y="128.8" width="121.4" height="155.6" rx="4" stroke="#c6c6c6" stroke-width="1.4" stroke-dasharray="1.4 1.7" fill="none"/>
<path d="M729 169.6 H830 M729 234.8 H830" stroke="#c6c6c6" stroke-width="1.3" stroke-dasharray="1.3 1.5"/>
<path d="M736.6 182.8L736.6 195.0L749.4 195.0M736.6 195.0L730.2 201.8" stroke="#a8a8a8" stroke-width=".7"/><path d="M730.2 189.6L743.0 189.6L749.4 182.8L736.6 182.8Z" fill="#45a6d2" fill-opacity=".92" stroke="none"/><path d="M730.2 189.6L743.0 189.6L743.0 201.8L730.2 201.8Z"/><path d="M730.2 189.6L736.6 182.8L749.4 182.8L749.4 195.0L743.0 201.8 M743.0 189.6L749.4 182.8"/>
<path d="M762.8 182.8L762.8 195.0L775.5 195.0M762.8 195.0L756.4 201.8" stroke="#a8a8a8" stroke-width=".7"/><path d="M769.1 189.6L775.5 182.8L775.5 195.0L769.1 201.8Z" fill="#45a6d2" fill-opacity=".92" stroke="none"/><path d="M756.4 189.6L769.1 189.6L769.1 201.8L756.4 201.8Z"/><path d="M756.4 189.6L762.8 182.8L775.5 182.8L775.5 195.0L769.1 201.8 M769.1 189.6L775.5 182.8"/>
<path d="M788.9 182.8L788.9 195.0L801.7 195.0M788.9 195.0L782.5 201.8" stroke="#a8a8a8" stroke-width=".7"/><path d="M782.5 189.6L795.3 189.6L795.3 201.8L782.5 201.8Z" fill="#45a6d2" fill-opacity="1" stroke="none"/><path d="M782.5 189.6L795.3 189.6L795.3 201.8L782.5 201.8Z"/><path d="M782.5 189.6L788.9 182.8L801.7 182.8L801.7 195.0L795.3 201.8 M795.3 189.6L801.7 182.8"/>
<path d="M736.6 210.6L736.6 222.8L749.4 222.8M736.6 222.8L730.2 229.6" stroke="#a8a8a8" stroke-width=".7"/><path d="M730.2 229.6L743.0 229.6L749.4 222.8L736.6 222.8Z" fill="#45a6d2" fill-opacity=".92" stroke="none"/><path d="M730.2 217.4L743.0 217.4L743.0 229.6L730.2 229.6Z"/><path d="M730.2 217.4L736.6 210.6L749.4 210.6L749.4 222.8L743.0 229.6 M743.0 217.4L749.4 210.6"/>
<path d="M762.8 210.6L762.8 222.8L775.5 222.8M762.8 222.8L756.4 229.6" stroke="#a8a8a8" stroke-width=".7"/><path d="M756.4 217.4L762.8 210.6L762.8 222.8L756.4 229.6Z" fill="#45a6d2" fill-opacity=".92" stroke="none"/><path d="M756.4 217.4L769.1 217.4L769.1 229.6L756.4 229.6Z"/><path d="M756.4 217.4L762.8 210.6L775.5 210.6L775.5 222.8L769.1 229.6 M769.1 217.4L775.5 210.6"/>
<path d="M788.9 210.6L788.9 222.8L801.7 222.8M788.9 222.8L782.5 229.6" stroke="#a8a8a8" stroke-width=".7"/><path d="M788.9 210.6L801.7 210.6L801.7 222.8L788.9 222.8Z" fill="#45a6d2" fill-opacity=".92" stroke="none"/><path d="M782.5 217.4L795.3 217.4L795.3 229.6L782.5 229.6Z"/><path d="M782.5 217.4L788.9 210.6L801.7 210.6L801.7 222.8L795.3 229.6 M795.3 217.4L801.7 210.6"/>
<path d="M810.0 186.4 l9.9 -5.7 l9.9 5.7 v11.4 l-9.9 5.7 l-9.9 -5.7Z" fill="#3a86b8" stroke="#2f6f9a" stroke-width=".8"/><path d="M819.9 192.1 v-11 M819.9 192.1 l-9.5 5.5 M819.9 192.1 l9.5 5.5" stroke="#2c6690" stroke-width=".9"/>
<path d="M816.8 212.7 A8.1 8.1 0 1 1 810.1 221.5" stroke-width="1.5"/><path d="M821.3 209.2 L816.2 212.8 L820.9 216.6" stroke-width="1.5" fill="none"/><path d="M821.5 209.4 L817.2 212.8 L821.3 216.2Z" fill="#3b3f4b" stroke="none"/>
<circle cx="735.4" cy="266.7" r="6.6" fill="#45a6d2" stroke="#3b3f4b" stroke-width="1.1"/><circle cx="784.4" cy="266.7" r="6.6" fill="#fff" stroke="#3b3f4b" stroke-width="1.1"/>
</svg>
<div id="hi" class="abs nw dv" style="letter-spacing:-0.0px;left:728px;top:243px;font-size:10px;line-height:13px;color:#111">Highlight Issues</div>
<div id="off" class="abs nw dv" style="left:747px;top:262px;font-size:10px;line-height:13px;color:#111">Off</div>
<div id="on" class="abs nw dv" style="left:796px;top:262px;font-size:10px;line-height:13px;color:#111">On</div>
<svg class="abs" style="left:1140px;top:128px" width="125" height="15" viewBox="1140 128 125 15" stroke="#555" stroke-width="1" fill="none"><path d="M1144.5 130 V141 M1259.5 130 V141 M1144.5 135.5 H1259.5 M1201.5 130 V135.5"/></svg>
<div id="mm" class="abs nw" style="letter-spacing:-0.016px;left:1186px;top:136px;font-size:10px;line-height:12px;color:#333">10 mm</div>
<svg class="abs" style="left:1646px;top:131px" width="36" height="26" viewBox="0 0 36 26"><g transform="translate(12.5 13)" fill="#3a86b5"><path d="M2.62 7.66L2.15 10.07L-2.15 10.07L-2.62 7.66L-5.32 6.10L-7.65 6.90L-9.80 3.18L-7.95 1.56L-7.95 -1.56L-9.80 -3.18L-7.65 -6.90L-5.32 -6.10L-2.62 -7.66L-2.15 -10.07L2.15 -10.07L2.62 -7.66L5.32 -6.10L7.65 -6.90L9.80 -3.18L7.95 -1.56L7.95 1.56L9.80 3.18L7.65 6.90L5.32 6.10Z M4.5 0 A4.5 4.5 0 1 0 -4.5 0 A4.5 4.5 0 1 0 4.5 0Z" fill-rule="evenodd" stroke="#3a86b5" stroke-width="1.2" stroke-linejoin="round"/></g><path d="M26 10.3 H36 L31 19Z" fill="#3a86b5"/></svg>
<div id="pr" class="abs nw" style="letter-spacing:-0.107px;left:730px;top:600px;font-size:12px;line-height:15px;color:#111">PRESSURE (PSI)</div>
<div class="abs" style="left:730px;top:617.5px;width:15px;height:92.5px;background:linear-gradient(180deg,#5d6cf2 0%,#4c8ff5 22%,#37c0f6 40%,#2deef2 52%,#2df3b8 70%,#35f56a 88%,#40f540 100%)"></div>
<div class="abs" style="left:746px;top:629.7px;width:7px;height:1px;background:#5a5a5a"></div><div class="abs nw lg" style="left:754.5px;top:624.8px;font-size:10px;line-height:12px;color:#333">5000</div>
<div class="abs" style="left:746px;top:645.6px;width:7px;height:1px;background:#5a5a5a"></div><div class="abs nw lg" style="left:754.5px;top:640.7px;font-size:10px;line-height:12px;color:#333">4000</div>
<div class="abs" style="left:746px;top:661.5px;width:7px;height:1px;background:#5a5a5a"></div><div class="abs nw lg" style="left:754.5px;top:656.6px;font-size:10px;line-height:12px;color:#333">3000</div>
<div class="abs" style="left:746px;top:677.4px;width:7px;height:1px;background:#5a5a5a"></div><div class="abs nw lg" style="left:754.5px;top:672.5px;font-size:10px;line-height:12px;color:#333">2000</div>
<div class="abs" style="left:746px;top:693.3px;width:7px;height:1px;background:#5a5a5a"></div><div class="abs nw lg" style="left:754.5px;top:688.4px;font-size:10px;line-height:12px;color:#333">1000</div>
<div class="abs" style="left:746px;top:709.2px;width:7px;height:1px;background:#5a5a5a"></div><div class="abs nw lg" style="left:754.5px;top:704.3px;font-size:10px;line-height:12px;color:#333">0</div>
<svg class="abs" style="left:750px;top:755px" width="60" height="75" viewBox="750 755 60 75" stroke-linecap="round" fill="none"><path d="M766.7 805 L796.5 788.5" stroke="#1f8a1f" stroke-width="4.2"/><path d="M766.7 805 L800 819.3" stroke="#c42a33" stroke-width="4.4"/><path d="M766.7 805 V774" stroke="#2222b8" stroke-width="5" stroke-linecap="butt"/><path d="M766.7 763 L772.7 776 H760.7Z" fill="#2222b8" stroke="#2222b8" stroke-width=".8" stroke-linejoin="round"/><circle cx="766.7" cy="805" r="2.5" fill="#2222b8"/></svg>
<div class="abs" style="left:1079px;top:822px;width:270px;height:16px;background:#4ea9d3"></div>
<div class="abs" style="left:1079.6px;top:822px;width:1px;height:16px;background:#8ecbe7"></div>
<div class="abs" style="left:1055px;top:817px;width:24px;height:24px;border-radius:4px;background:#4ea9d3"></div>
<div class="abs" style="left:1083.5px;top:827px;width:228px;height:6px;border-radius:3px;background:#e2e2e2"></div>
<div class="abs" style="left:1307px;top:824px;width:5px;height:12px;border-radius:2.5px;background:#fff"></div>
<div id="tm" class="abs nw dv" style="letter-spacing:-0.116px;left:1314.5px;top:823px;font-size:9.2px;line-height:13px;color:#fff;font-weight:bold">0.524</div>
<svg class="abs" style="left:1055px;top:817px" width="30" height="36" viewBox="1055 817 30 36"><path d="M1062.3 823.3 L1072.2 828.7 L1062.3 834.2Z" fill="#fff"/><g transform="translate(1060 831.4) rotate(-16 6 8)"><path d="M3.2 1.2 C3.2 0 5.3 0 5.3 1.2 V6.2 L6 6.3 C6.3 5.2 8 5.4 8 6.6 L8.6 6.8 C9 5.9 10.5 6.2 10.5 7.3 L11 7.5 C11.5 6.8 12.8 7.2 12.8 8.3 V12 C12.8 14 11.8 15 11.5 16.5 H5.8 C5 14.5 3.3 13.3 1.5 11.2 C0.6 10.2 1.7 9 2.8 9.9 L3.2 10.3Z" fill="#fff" stroke="#111" stroke-width="1.25" stroke-linejoin="round"/><path d="M6.2 10.6 H10.6 V14 H6.2Z" fill="#999" stroke="none"/></g></svg>
<div id="bot" class="abs"></div>
<div class="abs" style="left:226px;top:855px;width:1px;height:97px;background:#323641"></div>
<div class="abs" style="left:1485px;top:855px;width:1px;height:97px;background:#323641"></div>
<div class="abs" style="left:705px;top:855px;width:100px;height:97px;background:#4e5362"></div>
<div class="abs" style="left:805px;top:855px;width:1px;height:97px;background:#323641"></div>
<div class="abs" style="left:906px;top:855px;width:1px;height:97px;background:#323641"></div>
<div id="pp" class="abs nw gbtn" style="letter-spacing:1.48px;left:17px;top:886px;width:189px;height:38px;line-height:39.5px">&#8249; Previous Part</div>
<div id="np" class="abs nw gbtn" style="letter-spacing:1.608px;left:1507px;top:886px;width:160px;height:38px;line-height:39.5px">Next Part &#8250;</div>
<svg class="abs" style="left:705px;top:855px" width="300" height="97" viewBox="705 855 300 97">
<defs><linearGradient id="tg1" x1="0" y1="0" x2="1" y2="0"><stop offset="0" stop-color="#d2d2d4"/><stop offset=".55" stop-color="#c2c2c5"/><stop offset="1" stop-color="#a9a9ad"/></linearGradient></defs>
<g stroke="#85868c" stroke-width=".7" stroke-linejoin="round"><ellipse cx="756.3" cy="920.2" rx="19.6" ry="10.4" fill="#c4c4c7"/><ellipse cx="756.3" cy="917.6" rx="19" ry="9.8" fill="#cfcfd2"/><ellipse cx="756.6" cy="915.6" rx="16.6" ry="8.2" fill="#b0b0b4"/><path d="M739.3 931.2 L745.8 927 L753.5 929.6 L747.8 934.6Z" fill="#c6c6c9"/><path d="M744.4 889 L741 913 C744 920.5 769 921 773.6 912.5 L768.2 888Z" fill="url(#tg1)"/><circle cx="739" cy="896.8" r="3.8" fill="#cacacc"/><path d="M737.5 893.3 L744.5 887.5 L747 890.5 L741.5 896Z" fill="#cdcdd0"/><ellipse cx="757" cy="884.6" rx="12.6" ry="8.6" fill="#d4d4d6"/><ellipse cx="757" cy="885.6" rx="10.2" ry="6.4" fill="#c0c0c4"/><ellipse cx="756.8" cy="886.6" rx="7.6" ry="4.3" fill="#a2a2a7"/><path d="M749.3 887.2 C751 891.5 762.5 891.5 764.3 887.2 C762 889.5 751.5 889.5 749.3 887.2Z" fill="#c8c8cb" stroke="none"/><circle cx="763.3" cy="878.4" r="2" fill="#9c9ca0"/></g>
<g stroke="#8c8d92" stroke-width=".7" stroke-linejoin="round"><path d="M832.6 908 C832.6 904.5 833.5 903.5 836 901.5 L855 906.5 C858 908 858.5 910 858.5 913 L858.5 933 C858.5 936 857 936.6 854.5 936 L835 931.4 C833 930.8 832.6 930 832.6 928Z" fill="#bdbdc1"/><path d="M858 909 C859.5 905.5 861 904 863 902 L877 886.5 C879.5 884.5 880.6 885.5 880.6 888 L880.6 908.5 C880.6 910.5 880 911.5 878.5 913 L862 934.5 C860 936.6 858.5 936.4 858.5 933Z" fill="#c3c3c6"/><path d="M834 903 L852.5 877 C854.5 874.2 856 873.8 858.5 874.8 L877.5 884 C879.5 885 879 886 877.5 887.5 L862 903.5 C859.5 906.5 858 907.3 855 906.5 L836 901.5Z" fill="#c9c9cc"/><path d="M832.8 913.5 L855 918 C857.5 918.5 858.5 917.5 860 915.5" fill="none" stroke="#9a9ba0"/><path d="M849 883 L873 893.5" fill="none" stroke="#a4a5aa" stroke-width=".6"/><circle cx="877.6" cy="894" r=".8" fill="#9a9ba0" stroke="none"/><circle cx="877.6" cy="905.5" r=".8" fill="#9a9ba0" stroke="none"/><circle cx="862.5" cy="912.5" r=".8" fill="#9a9ba0" stroke="none"/><circle cx="862.5" cy="924" r=".8" fill="#9a9ba0" stroke="none"/></g>
<g stroke-linecap="round" stroke-linejoin="round" fill="none"><path d="M956.3 905.8 L971.4 889.4" stroke="#d4d4d7" stroke-width="5.2"/><path d="M956.3 905.8 L928.8 898.2" stroke="#d4d4d7" stroke-width="5.2"/><path d="M956.3 905.8 L984.8 915.2" stroke="#d4d4d7" stroke-width="5.2"/><path d="M956.3 905.8 L943.6 924.2" stroke="#d4d4d7" stroke-width="5.2"/><path d="M944.5 900 L961.5 895 L968.5 907.5 L951 913Z" fill="#d4d4d7" stroke="#d4d4d7" stroke-width="5" transform="translate(0 1.8)"/><path d="M956.3 904 L971.4 887.6" stroke="#bbbbbe" stroke-width="4.8"/><path d="M956.3 904 L928.8 896.4" stroke="#bbbbbe" stroke-width="4.8"/><path d="M956.3 904 L984.8 913.4" stroke="#bbbbbe" stroke-width="4.8"/><path d="M956.3 904 L943.6 922.4" stroke="#bbbbbe" stroke-width="4.8"/><path d="M944.5 900 L961.5 895 L968.5 907.5 L951 913Z" fill="#b8b8bb" stroke="#b8b8bb" stroke-width="5"/><circle cx="971.4" cy="887.6" r="1" fill="#9a9a9e"/><circle cx="928.8" cy="896.4" r="1" fill="#9a9a9e"/><circle cx="984.8" cy="913.4" r="1" fill="#9a9a9e"/><circle cx="943.6" cy="922.4" r="1" fill="#9a9a9e"/></g>
<circle cx="722.9" cy="935.8" r="6.2" fill="#f6b436"/><circle cx="722.9" cy="935.8" r="3.4" fill="none" stroke="#eaa52c" stroke-width=".9"/><circle cx="823.9" cy="935.8" r="6.2" fill="#f6b436"/><circle cx="823.9" cy="935.8" r="3.4" fill="none" stroke="#eaa52c" stroke-width=".9"/><circle cx="925.0" cy="935.8" r="6.2" fill="#f6b436"/><circle cx="925.0" cy="935.8" r="3.4" fill="none" stroke="#eaa52c" stroke-width=".9"/></svg>
</body>
</html>
